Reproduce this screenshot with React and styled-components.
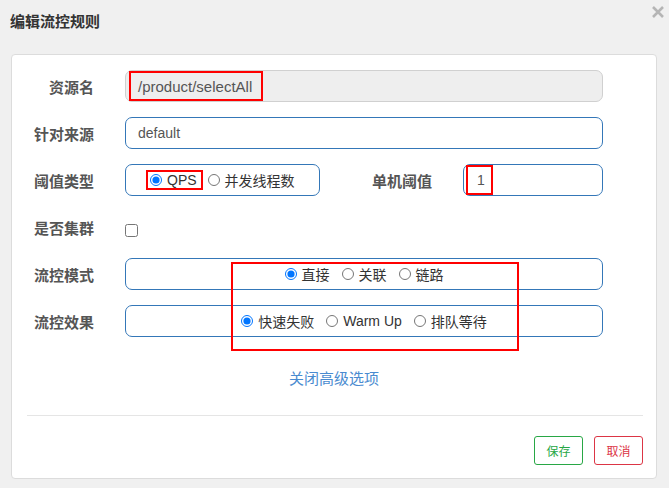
import React from 'react';
import styled, { createGlobalStyle } from 'styled-components';

const GlobalStyle = createGlobalStyle`
  html, body {
    margin: 0;
    padding: 0;
    background: #f0f0f0;
  }
  body {
    font-family: "Liberation Sans", "Noto Sans CJK SC", sans-serif;
    color: #555;
  }
`;

const Dialog = styled.div`
  width: 669px;
  height: 488px;
  box-sizing: border-box;
  background: #f0f0f0;
  position: relative;
`;

const Header = styled.div`
  height: 54px;
  box-sizing: border-box;
  padding: 12px 10px 0;
  display: flex;
  justify-content: space-between;
  align-items: flex-start;
`;

const Title = styled.h3`
  margin: 0;
  font-size: 15px;
  line-height: 20px;
  font-weight: bold;
  color: #333;
`;

const Close = styled.button`
  border: 0;
  background: none;
  padding: 0;
  margin: -7px -6px 0 0;
  width: 14px;
  height: 14px;
  cursor: pointer;
  display: flex;
`;

const Panel = styled.div`
  position: relative;
  margin: 0 12px 0 11px;
  height: 425px;
  box-sizing: border-box;
  background: #fff;
  border: 1px solid #dcdcdc;
  border-radius: 4px;
  padding: 15px 53px 0 0;
`;

const Row = styled.div`
  display: flex;
  align-items: center;
  height: 32px;
  margin-bottom: ${p => p.$gap ?? 15}px;
`;

const Label = styled.label`
  width: ${p => p.$width || 82}px;
  flex-shrink: 0;
  margin-right: 31px;
  text-align: right;
  font-size: 15px;
  font-weight: bold;
  color: #555;
`;

const Input = styled.div`
  flex: 1;
  height: 32px;
  box-sizing: border-box;
  display: flex;
  align-items: stretch;
  border: 1px solid ${p => (p.$disabled ? '#d0d0d0' : '#3477b8')};
  background: ${p => (p.$disabled ? '#eee' : '#fff')};
  border-radius: 7px;
  padding-left: ${p => p.$pad ?? 12}px;
  font-size: ${p => p.$size || 14}px;
  color: #555;
`;

const Value = styled.span`
  display: flex;
  align-items: center;
`;

const Mark = styled.span`
  display: inline-flex;
  align-items: center;
  box-sizing: border-box;
  border: 2px solid #f00;
  padding: ${p => p.$pad || '0 7px'};
`;

const Group = styled.div`
  flex: ${p => (p.$width ? '0 0 auto' : '1')};
  width: ${p => (p.$width ? `${p.$width}px` : 'auto')};
  height: 32px;
  box-sizing: border-box;
  border: 1px solid #3477b8;
  border-radius: 7px;
  display: flex;
  align-items: center;
  justify-content: ${p => (p.$center ? 'center' : 'flex-start')};
  padding-left: ${p => p.$pad || 0}px;
  font-size: 14px;
  color: #333;
`;

const Choice = styled.label`
  display: inline-flex;
  align-items: center;
  gap: 5px;
  white-space: nowrap;
  & + & {
    margin-left: 12px;
  }
`;

const Radio = styled.input.attrs({ type: 'radio' })`
  width: 12px;
  height: 12px;
  margin: 0;
`;

const Check = styled.input.attrs({ type: 'checkbox' })`
  width: 13px;
  height: 13px;
  margin: 6px 0 0;
`;

const Focus = styled.div`
  position: absolute;
  left: 219px;
  top: 207px;
  width: 288px;
  height: 89px;
  box-sizing: border-box;
  border: 2px solid #f00;
  pointer-events: none;
`;

const Toggle = styled.div`
  margin-top: 32px;
  margin-left: 53px;
  text-align: center;
  font-size: 15px;
  line-height: 20px;
  color: #4a8bd0;
  cursor: pointer;
`;

const Rule = styled.hr`
  margin: 26px 0 0 15px;
  border: 0;
  border-top: 1px solid #e5e5e5;
  width: 616px;
`;

const Footer = styled.div`
  display: flex;
  justify-content: flex-end;
  gap: 11px;
  margin-right: -40px;
  margin-top: 20px;
`;

const Button = styled.button`
  width: 49px;
  height: 29px;
  box-sizing: border-box;
  background: #fff;
  border: 1px solid ${p => p.$color};
  color: ${p => p.$color};
  border-radius: 3px;
  font-family: inherit;
  font-size: 12px;
  padding: 0;
  cursor: pointer;
`;

const noop = () => {};

export default function App() {
  return (
    <Dialog>
      <GlobalStyle />
      <Header>
        <Title>编辑流控规则</Title>
        <Close aria-label="close">
          <svg width="14" height="14" viewBox="0 0 14 14">
            <path d="M2 2 L12 12 M12 2 L2 12" stroke="#b5b5b5" strokeWidth="2.6" />
          </svg>
        </Close>
      </Header>
      <Panel>
        <Row>
          <Label>资源名</Label>
          <Input $disabled $pad={3} $size={15}>
            <Mark $pad="0 9px 0 7px">/product/selectAll</Mark>
          </Input>
        </Row>
        <Row>
          <Label>针对来源</Label>
          <Input>
            <Value>default</Value>
          </Input>
        </Row>
        <Row>
          <Label>阈值类型</Label>
          <Group $width={195} $pad={20}>
            <Mark $pad="0 4px 0 2px">
              <Choice>
                <Radio name="grade" checked onChange={noop} />
                QPS
              </Choice>
            </Mark>
            <Choice style={{ marginLeft: 5 }}>
              <Radio name="grade" checked={false} onChange={noop} />
              并发线程数
            </Choice>
          </Group>
          <Label $width={112}>单机阈值</Label>
          <Input $pad={2}>
            <Mark $pad="0 6px 0 9px">1</Mark>
          </Input>
        </Row>
        <Row>
          <Label>是否集群</Label>
          <Check onChange={noop} />
        </Row>
        <Row>
          <Label>流控模式</Label>
          <Group $center>
            <Choice>
              <Radio name="strategy" checked onChange={noop} />
              直接
            </Choice>
            <Choice>
              <Radio name="strategy" checked={false} onChange={noop} />
              关联
            </Choice>
            <Choice>
              <Radio name="strategy" checked={false} onChange={noop} />
              链路
            </Choice>
          </Group>
        </Row>
        <Row $gap={0}>
          <Label>流控效果</Label>
          <Group $center>
            <Choice>
              <Radio name="behavior" checked onChange={noop} />
              快速失败
            </Choice>
            <Choice>
              <Radio name="behavior" checked={false} onChange={noop} />
              Warm Up
            </Choice>
            <Choice>
              <Radio name="behavior" checked={false} onChange={noop} />
              排队等待
            </Choice>
          </Group>
        </Row>
        <Focus />
        <Toggle>关闭高级选项</Toggle>
        <Rule />
        <Footer>
          <Button $color="#28a745">保存</Button>
          <Button $color="#dc3545">取消</Button>
        </Footer>
      </Panel>
    </Dialog>
  );
}
